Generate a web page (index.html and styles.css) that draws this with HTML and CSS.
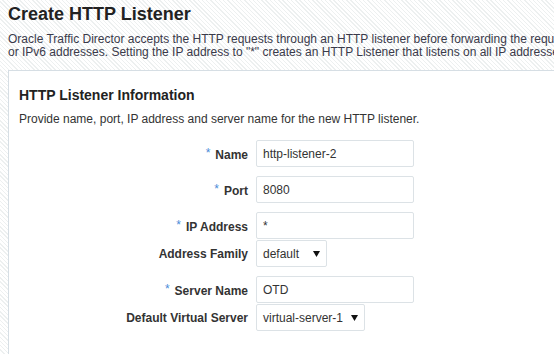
FILE: index.html
```html
<!DOCTYPE html>
<html lang="en">
<head>
  <meta charset="UTF-8">
  <meta name="viewport" content="width=device-width, initial-scale=1.0">
  <title>Create HTTP Listener</title>
  <link rel="stylesheet" href="styles.css">
</head>
<body>
  <div class="page">
    <h1 class="page-title">Create HTTP Listener</h1>
    <p class="intro">Oracle Traffic Director accepts the HTTP requests through an HTTP listener before forwarding the requests to the origin servers. A listener can listen on IPv4<br>or IPv6 addresses. Setting the IP address to "*" creates an HTTP Listener that listens on all IP addresses of the node.</p>

    <div class="panel">
      <h2 class="panel-title">HTTP Listener Information</h2>
      <p class="hint">Provide name, port, IP address and server name for the new HTTP listener.</p>

      <form class="form">
        <div class="row required">
          <label class="label" for="name"><span class="star">*</span>Name</label>
          <input class="field" type="text" id="name" value="http-listener-2">
        </div>
        <div class="row required">
          <label class="label" for="port"><span class="star">*</span>Port</label>
          <input class="field" type="text" id="port" value="8080">
        </div>
        <div class="row required">
          <label class="label" for="ip"><span class="star">*</span>IP Address</label>
          <input class="field" type="text" id="ip" value="*">
        </div>
        <div class="row">
          <span class="label">Address Family</span>
          <div class="select select-family">
            <span>default</span>
            <svg class="arrow" width="7" height="6" viewBox="0 0 7 6"><path d="M0 0h7L3.5 6z" fill="#111"/></svg>
          </div>
        </div>
        <div class="row required">
          <label class="label" for="server"><span class="star">*</span>Server Name</label>
          <input class="field" type="text" id="server" value="OTD">
        </div>
        <div class="row">
          <span class="label">Default Virtual Server</span>
          <div class="select select-vs">
            <span>virtual-server-1</span>
            <svg class="arrow" width="7" height="6" viewBox="0 0 7 6"><path d="M0 0h7L3.5 6z" fill="#111"/></svg>
          </div>
        </div>
      </form>
    </div>
  </div>
</body>
</html>
```

FILE: styles.css
```css
* {
  box-sizing: border-box;
}

body {
  margin: 0;
  overflow: hidden;
  font-family: "Liberation Sans", Arial, sans-serif;
  color: #333;
  background: repeating-linear-gradient(45deg, #fff 0, #fff 2px, #edf0f0 2px, #edf0f0 3px);
}

.page {
  padding: 3px 0 0 8px;
}

.page-title {
  margin: 0;
  font-size: 18px;
  line-height: 22px;
  font-weight: bold;
  color: #222;
}

.intro {
  margin: 8px 0 0;
  font-size: 12px;
  line-height: 13px;
  white-space: nowrap;
  color: #3a3a4a;
}

.panel {
  margin-top: 11px;
  width: 640px;
  min-height: 300px;
  background-color: #fff;
  border: 1px solid #d6dee4;
  padding: 16px 10px;
}

.panel-title {
  margin: 0;
  font-size: 14px;
  line-height: 17px;
  font-weight: bold;
  color: #222;
}

.hint {
  margin: 7px 0 0;
  font-size: 12px;
  line-height: 16px;
}

.form {
  padding-top: 4px;
}

.row {
  display: flex;
  align-items: center;
  margin-top: 1px;
}

.row.required {
  margin-top: 9px;
}

.label {
  width: 237px;
  padding-right: 8px;
  text-align: right;
  font-size: 12px;
  font-weight: bold;
  color: #333;
}

.star {
  color: #4a8cd8;
  font-weight: normal;
  margin-right: 5px;
  vertical-align: 2px;
}

.field {
  width: 158px;
  height: 27px;
  margin: 0;
  padding: 0 6px;
  border: 1px solid #dce2e6;
  border-radius: 2px;
  font: 12px "Liberation Sans", Arial, sans-serif;
  color: #333;
  outline: none;
}

.select {
  display: flex;
  align-items: center;
  justify-content: space-between;
  height: 27px;
  padding: 0 6px;
  border: 1px solid #dce2e6;
  border-radius: 2px;
  font-size: 12px;
  color: #333;
}

.select-family {
  width: 71px;
}

.select-vs {
  width: 109px;
}

.arrow {
  display: block;
}
```
